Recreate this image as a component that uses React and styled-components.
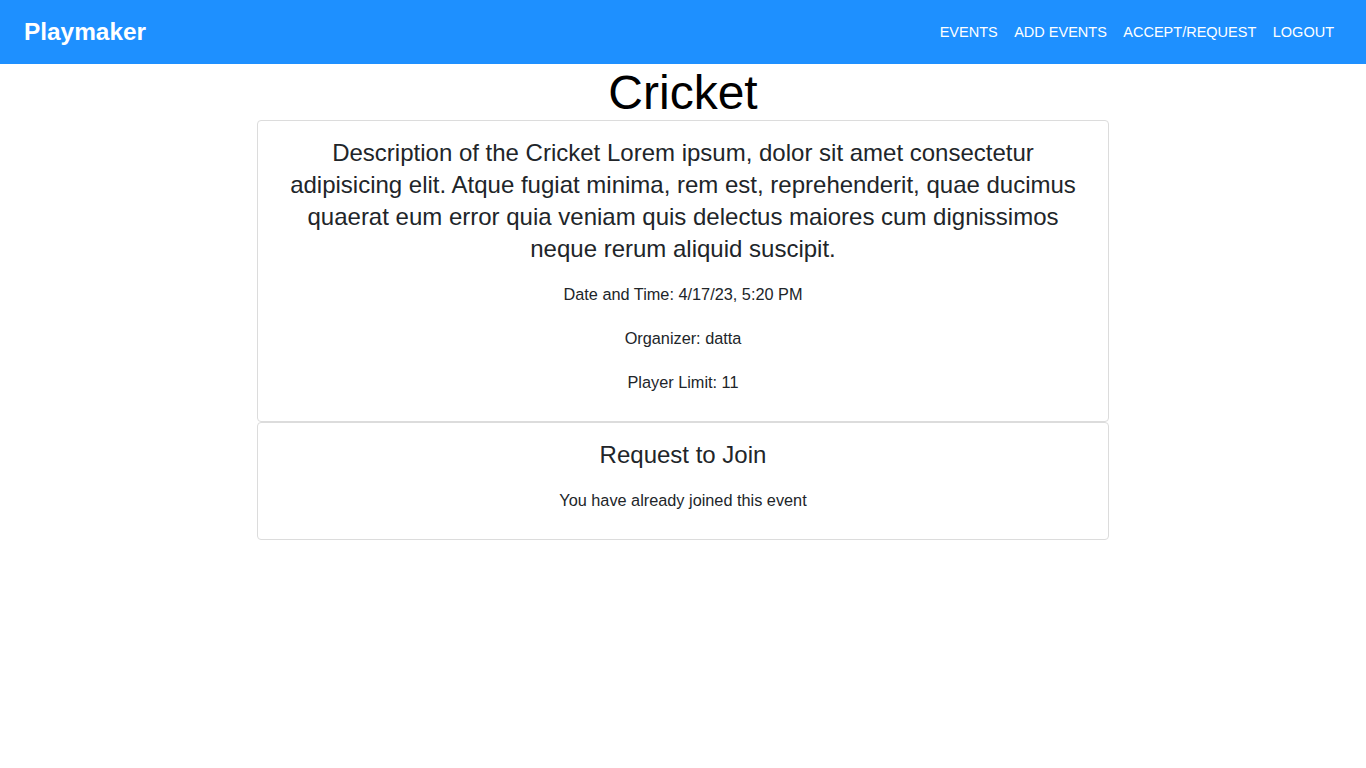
import React from "react";
import styled, { createGlobalStyle } from "styled-components";

const GlobalStyle = createGlobalStyle`
  body {
    margin: 0;
    font-family: "Liberation Sans", Arial, sans-serif;
    background: #fff;
    color: #212529;
  }
`;

const NavBar = styled.nav`
  display: flex;
  align-items: center;
  justify-content: space-between;
  height: 64px;
  padding: 0 32px 0 24px;
  background: #1e90ff;
`;

const Brand = styled.a`
  color: #fff;
  font-size: 24.4px;
  font-weight: bold;
  text-decoration: none;
`;

const NavLinks = styled.div`
  display: flex;
  gap: 16.5px;
  margin-top: -1px;
`;

const NavLink = styled.a`
  color: #fff;
  font-size: 14.5px;
  text-transform: uppercase;
  text-decoration: none;
`;

const Main = styled.main`
  display: flex;
  flex-direction: column;
  align-items: center;
`;

const Title = styled.h1`
  margin: 2px 0 0;
  font-size: 48px;
  font-weight: normal;
  line-height: 54px;
  color: #000;
`;

const Card = styled.section`
  width: 852px;
  box-sizing: border-box;
  border: 1px solid #dcdcdc;
  border-radius: 4px;
  padding: ${(p) => (p.$compact ? "16px 24px 7px" : "16px 24px 7px")};
  text-align: center;
`;

const Description = styled.p`
  margin: 0 0 17px;
  font-size: 24px;
  line-height: 32px;
`;

const Heading = styled.h3`
  margin: 0 0 17px;
  font-size: 24px;
  font-weight: normal;
  line-height: 32px;
`;

const Info = styled.p`
  margin: 0 0 20px;
  font-size: 16.3px;
  line-height: 24px;
`;

export default function App() {
  return (
    <>
      <GlobalStyle />
      <NavBar>
        <Brand href="#">Playmaker</Brand>
        <NavLinks>
          <NavLink href="#">Events</NavLink>
          <NavLink href="#">Add Events</NavLink>
          <NavLink href="#">Accept/Request</NavLink>
          <NavLink href="#">Logout</NavLink>
        </NavLinks>
      </NavBar>
      <Main>
        <Title>Cricket</Title>
        <Card>
          <Description>
            Description of the Cricket Lorem ipsum, dolor sit amet consectetur
            adipisicing elit. Atque fugiat minima, rem est, reprehenderit, quae
            ducimus quaerat eum error quia veniam quis delectus maiores cum
            dignissimos neque rerum aliquid suscipit.
          </Description>
          <Info>Date and Time: 4/17/23, 5:20 PM</Info>
          <Info>Organizer: datta</Info>
          <Info>Player Limit: 11</Info>
        </Card>
        <Card $compact>
          <Heading>Request to Join</Heading>
          <Info>You have already joined this event</Info>
        </Card>
      </Main>
    </>
  );
}
